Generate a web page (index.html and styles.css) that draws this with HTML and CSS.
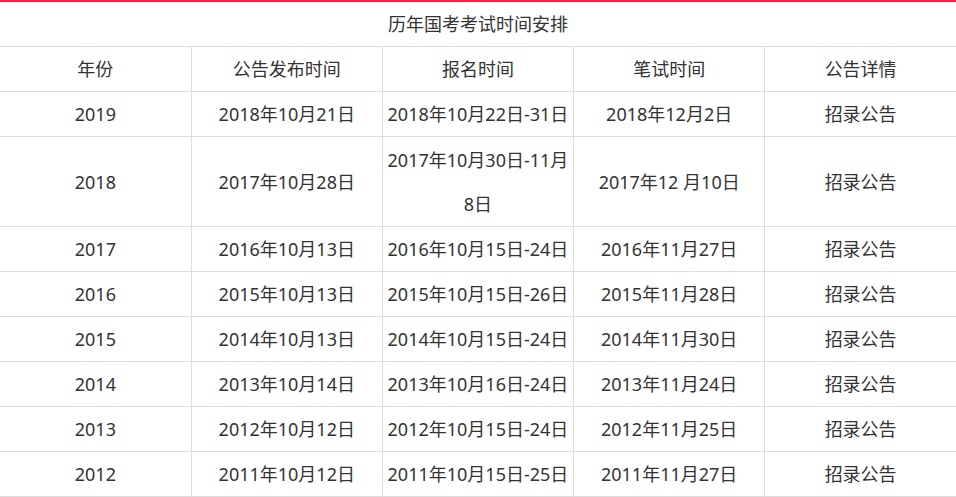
FILE: index.html
```html
<!DOCTYPE html>
<html lang="zh-CN">
<head>
<meta charset="utf-8">
<title>历年国考考试时间安排</title>
<link rel="stylesheet" href="styles.css">
</head>
<body>
<div class="wrap">
  <div class="title">历年国考考试时间安排</div>
  <table class="sched">
    <thead>
      <tr><th>年份</th><th>公告发布时间</th><th>报名时间</th><th>笔试时间</th><th>公告详情</th></tr>
    </thead>
    <tbody>
      <tr><td>2019</td><td>2018年10月21日</td><td>2018年10月22日-31日</td><td>2018年12月2日</td><td>招录公告</td></tr>
      <tr class="tall"><td>2018</td><td>2017年10月28日</td><td>2017年10月30日-11月8日</td><td>2017年12 月10日</td><td>招录公告</td></tr>
      <tr><td>2017</td><td>2016年10月13日</td><td>2016年10月15日-24日</td><td>2016年11月27日</td><td>招录公告</td></tr>
      <tr><td>2016</td><td>2015年10月13日</td><td>2015年10月15日-26日</td><td>2015年11月28日</td><td>招录公告</td></tr>
      <tr><td>2015</td><td>2014年10月13日</td><td>2014年10月15日-24日</td><td>2014年11月30日</td><td>招录公告</td></tr>
      <tr><td>2014</td><td>2013年10月14日</td><td>2013年10月16日-24日</td><td>2013年11月24日</td><td>招录公告</td></tr>
      <tr><td>2013</td><td>2012年10月12日</td><td>2012年10月15日-24日</td><td>2012年11月25日</td><td>招录公告</td></tr>
      <tr><td>2012</td><td>2011年10月12日</td><td>2011年10月15日-25日</td><td>2011年11月27日</td><td>招录公告</td></tr>
    </tbody>
  </table>
</div>
</body>
</html>
```
FILE: styles.css
```css
html, body {
  margin: 0;
  padding: 0;
  background: #fff;
}
body {
  font-family: "Noto Sans", "Noto Sans CJK SC", sans-serif;
  color: #333;
  font-size: 18px;
}
.wrap {
  border-top: 2px solid #f5213f;
}
.title {
  height: 44px;
  line-height: 44px;
  text-align: center;
  font-size: 18px;
  color: #333;
}
.sched {
  width: 100%;
  border-collapse: collapse;
  table-layout: fixed;
}
.sched th,
.sched td {
  border: 1px solid #dddddd;
  padding: 0;
  line-height: 44px;
  text-align: center;
  vertical-align: middle;
  font-weight: normal;
  font-size: 18px;
  color: #333;
}
.sched th:first-child,
.sched td:first-child {
  border-left: none;
}
.sched th:last-child,
.sched td:last-child {
  border-right: none;
}
.sched tr.tall td {
  padding-top: 1px;
}
```
